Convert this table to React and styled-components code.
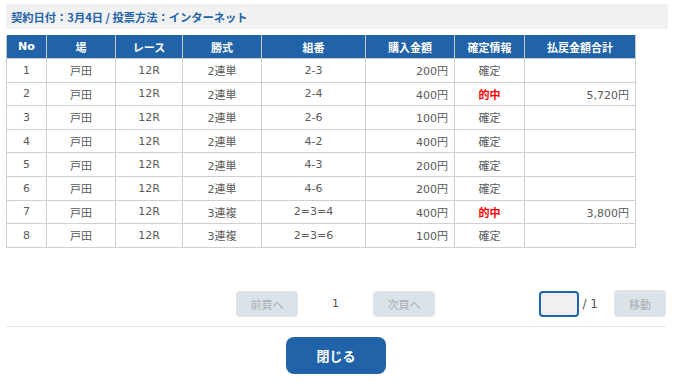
import React from "react";
import styled, { createGlobalStyle } from "styled-components";

const Global = createGlobalStyle`
  html, body { margin: 0; padding: 0; background: #fff; }
  body { font-family: "DejaVu Sans", "Noto Sans CJK JP", sans-serif; }
`;

const Page = styled.div`
  width: 662px;
  padding: 4px 0 0 6px;
`;

const TitleBar = styled.div`
  height: 25px;
  background: #f1f1f1;
  display: flex;
  align-items: center;
  padding-left: 5px;
  font-size: 11.25px;
  font-weight: bold;
  color: #2163a9;
  font-family: "Noto Sans CJK JP", sans-serif;
`;

const Table = styled.table`
  margin-top: 6px;
  width: 629px;
  table-layout: fixed;
  border-collapse: collapse;
  font-size: 11px;
`;

const Th = styled.th`
  background: #2163a9;
  color: #fff;
  font-weight: bold;
  height: 23px;
  border: 1px solid #c8c8c8;
  border-top: none;
  padding: 0;
  text-align: center;
  font-family: "DejaVu Sans", "Noto Sans CJK JP", sans-serif;
`;

const Td = styled.td`
  height: 22.6px;
  border: 1px solid #cfcfcf;
  padding: 0 ${(p) => (p.$align === "right" ? "6px" : "0")} 0 0;
  text-align: ${(p) => p.$align || "center"};
  color: ${(p) => (p.$hit ? "#ff0000" : "#5a5a5a")};
  font-weight: ${(p) => (p.$hit ? "bold" : "normal")};
`;

const Pager = styled.div`
  margin: 42px 2px 0 0;
  display: flex;
  align-items: center;
  height: 28px;
`;

const LeftGroup = styled.div`
  margin-left: 230px;
  display: flex;
  align-items: center;
`;

const RightGroup = styled.div`
  margin-left: auto;
  display: flex;
  align-items: center;
`;

const PageBtn = styled.button`
  width: ${(p) => p.$w || 62}px;
  height: ${(p) => p.$h || 26}px;
  border: none;
  border-radius: 4px;
  background: #dbe2e8;
  color: #a9afb4;
  font-size: 11px;
  font-family: "Noto Sans CJK JP", sans-serif;
  padding: 0;
`;

const PageNum = styled.span`
  width: 75px;
  text-align: center;
  font-size: 11px;
  color: #555;
`;

const PageInput = styled.input`
  box-sizing: border-box;
  width: 40px;
  height: 26px;
  border: 2px solid #2163a9;
  border-radius: 4px;
  background: #f0f0f0;
  outline: none;
  margin: 0;
`;

const Total = styled.span`
  margin: 0 16px 0 4px;
  font-size: 12px;
  color: #555;
`;

const Divider = styled.div`
  margin: 8px 2px 0 0;
  height: 1px;
  background: #e8e8e8;
`;

const Footer = styled.div`
  display: flex;
  justify-content: center;
  padding: 10px 2px 0 0;
`;

const CloseBtn = styled.button`
  width: 100px;
  height: 37px;
  border: none;
  border-radius: 8px;
  background: #2163a9;
  color: #fff;
  font-weight: bold;
  font-size: 13px;
  font-family: "Noto Sans CJK JP", sans-serif;
  padding: 0;
`;

const cols = [40, 69, 67, 79, 104, 89, 70, 111];
const heads = ["No", "場", "レース", "勝式", "組番", "購入金額", "確定情報", "払戻金額合計"];
const rows = [
  ["1", "戸田", "12R", "2連単", "2-3", "200円", "確定", ""],
  ["2", "戸田", "12R", "2連単", "2-4", "400円", "的中", "5,720円"],
  ["3", "戸田", "12R", "2連単", "2-6", "100円", "確定", ""],
  ["4", "戸田", "12R", "2連単", "4-2", "400円", "確定", ""],
  ["5", "戸田", "12R", "2連単", "4-3", "200円", "確定", ""],
  ["6", "戸田", "12R", "2連単", "4-6", "200円", "確定", ""],
  ["7", "戸田", "12R", "3連複", "2=3=4", "400円", "的中", "3,800円"],
  ["8", "戸田", "12R", "3連複", "2=3=6", "100円", "確定", ""],
];

export default function App() {
  return (
    <Page>
      <Global />
      <TitleBar>契約日付：3月4日 / 投票方法：インターネット</TitleBar>
      <Table>
        <colgroup>
          {cols.map((w, i) => (
            <col key={i} style={{ width: w }} />
          ))}
        </colgroup>
        <thead>
          <tr>
            {heads.map((h) => (
              <Th key={h}>{h}</Th>
            ))}
          </tr>
        </thead>
        <tbody>
          {rows.map((r) => (
            <tr key={r[0]}>
              {r.map((c, i) => (
                <Td
                  key={i}
                  $align={i === 5 || i === 7 ? "right" : undefined}
                  $hit={i === 6 && c === "的中"}
                >
                  {c}
                </Td>
              ))}
            </tr>
          ))}
        </tbody>
      </Table>
      <Pager>
        <LeftGroup>
          <PageBtn>前頁へ</PageBtn>
          <PageNum>1</PageNum>
          <PageBtn>次頁へ</PageBtn>
        </LeftGroup>
        <RightGroup>
          <PageInput />
          <Total>/ 1</Total>
          <PageBtn $w={52} $h={27}>移動</PageBtn>
        </RightGroup>
      </Pager>
      <Divider />
      <Footer>
        <CloseBtn>閉じる</CloseBtn>
      </Footer>
    </Page>
  );
}
